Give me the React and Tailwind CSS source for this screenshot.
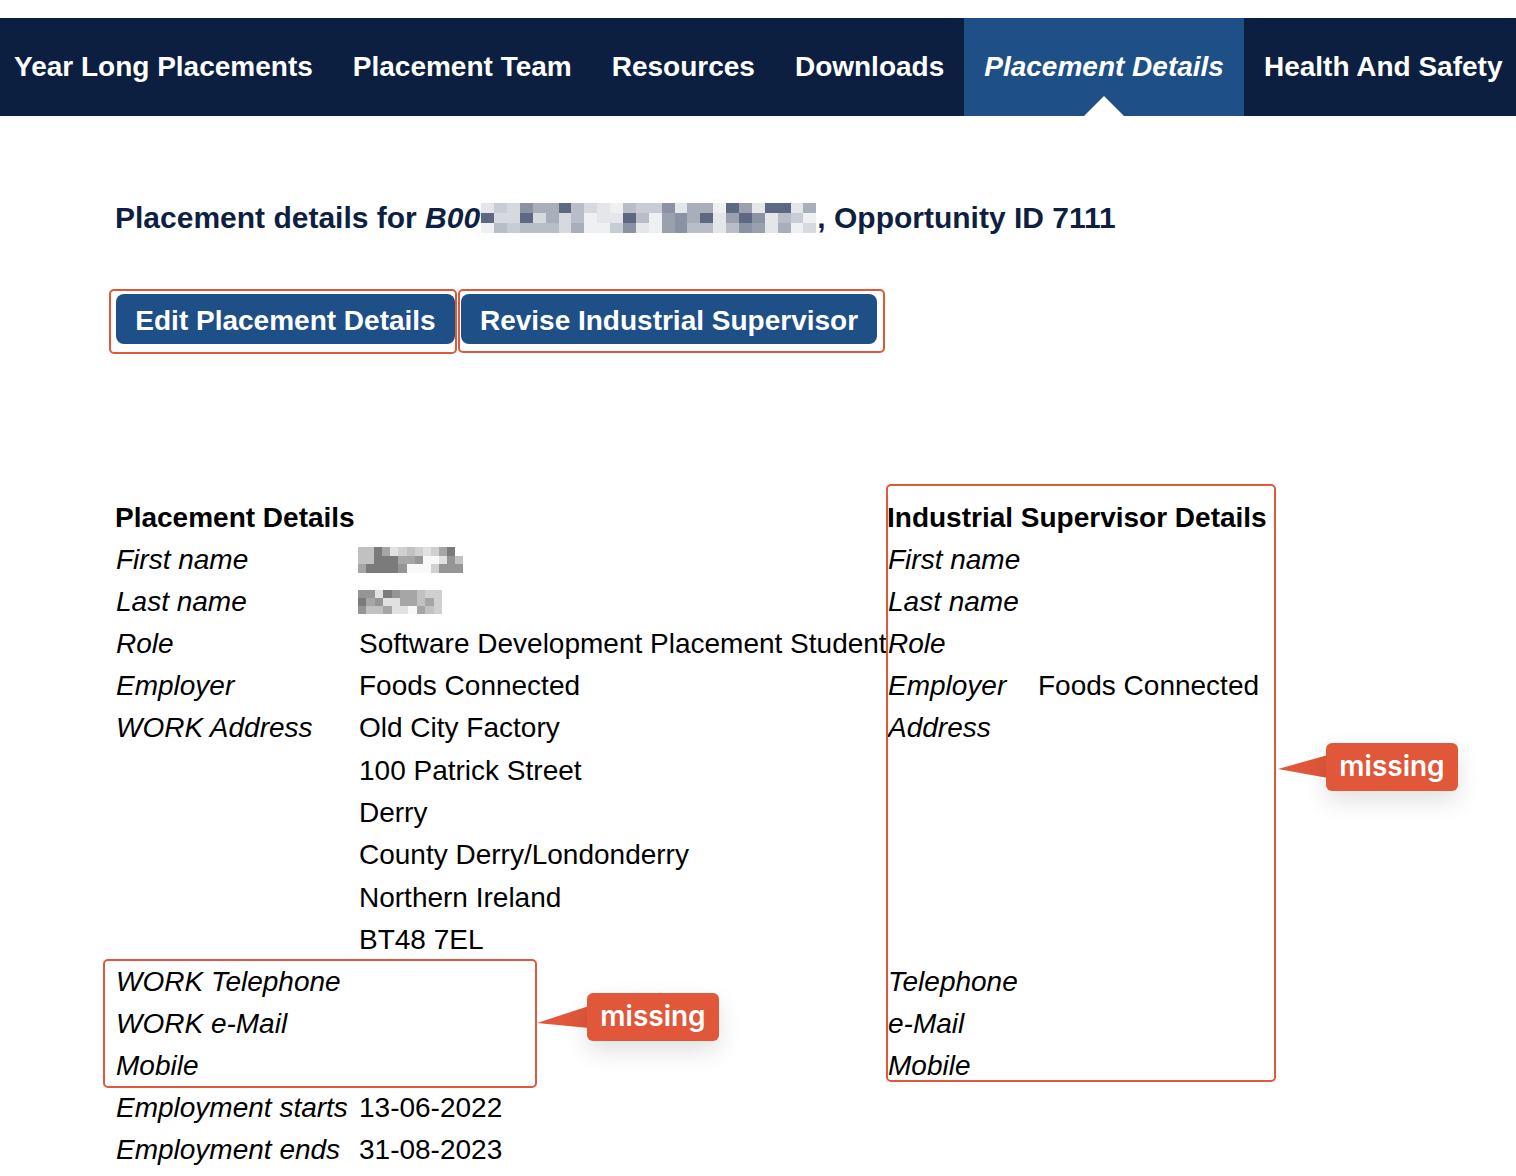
import React from "react";

const navItems = [
  { label: "Year Long Placements", first: true },
  { label: "Placement Team" },
  { label: "Resources" },
  { label: "Downloads" },
  { label: "Placement Details", active: true },
  { label: "Health And Safety" },
];

const slate = ["#e4e6ea", "#c8ccd4", "#a9aebb", "#8a92a3", "#5d6983", "#d6d9df", "#eff0f2", "#b9bdc7", "#9aa0ae"];
const headPattern = [
  "01532247506711302264804402",
  "45545257600476832408430716",
  "67177752661306837707380265",
];
const grey = ["#a6a6a6", "#c1c1c1", "#7b7b7b", "#e1e1e1", "#f8f8f8", "#959595", "#d0d0d0"];
const fnPattern = ["112036163602", "1122200544351", "0222254446555"];
const lnPattern = ["5532500166", "2053300106", "5110334016"];

function Pixels({ pattern, palette, cw, ch }) {
  return (
    <div className="flex flex-col">
      {pattern.map((row, r) => (
        <div key={r} className="flex">
          {row.split("").map((c, i) => (
            <div key={i} style={{ width: cw, height: ch, background: palette[Number(c)] }} />
          ))}
        </div>
      ))}
    </div>
  );
}

function Label({ children }) {
  return <div className="h-[42px] flex items-center italic pl-px whitespace-nowrap">{children}</div>;
}
function Val({ children }) {
  return <div className="h-[42px] flex items-center pl-px whitespace-nowrap">{children}</div>;
}
function AddrLine({ children }) {
  return <div className="h-[42.4px] flex items-center pl-px whitespace-nowrap">{children}</div>;
}
function Empty() {
  return <div className="h-[42px]" />;
}

function Callout({ boxLeft, boxTop, svgLeft, svgTop, svgW, svgH, points }) {
  return (
    <>
      <svg
        className="absolute"
        style={{ left: svgLeft, top: svgTop }}
        width={svgW}
        height={svgH}
        viewBox={`0 0 ${svgW} ${svgH}`}
      >
        <polygon points={points} fill="#e0573a" />
      </svg>
      <div
        className="absolute w-[132px] h-[48px] rounded-[6px] bg-[#e0573a] text-white flex items-center justify-center text-[28px] font-semibold font-['Inter',sans-serif] shadow-[0_10px_24px_rgba(0,0,0,0.12)]"
        style={{ left: boxLeft, top: boxTop }}
      >
        <span className="leading-none -mt-[2px]">missing</span>
      </div>
    </>
  );
}

export default function App() {
  return (
    <div className="relative w-[1516px] min-h-[1176px] bg-white font-['Liberation_Sans',Arial,sans-serif] overflow-hidden">
      <div className="h-[18px]" />
      <nav className="h-[98px] bg-[#0d1f40] flex">
        {navItems.map((it) => (
          <div
            key={it.label}
            className={
              "relative h-full flex items-center text-[28px] font-bold text-white whitespace-nowrap " +
              (it.first ? "pl-[14px] pr-[20px] " : "px-[20px] ") +
              (it.active ? "bg-[#1f4f87] italic" : "")
            }
          >
            {it.label}
            {it.active && (
              <svg className="absolute bottom-0 left-1/2 -translate-x-1/2" width="40" height="20" viewBox="0 0 40 20">
                <polygon points="0,20 20,0 40,20" fill="#ffffff" />
              </svg>
            )}
          </div>
        ))}
      </nav>

      <main className="pl-[115px]">
        <h1 className="mt-[80px] h-[42px] flex items-center text-[30px] font-bold text-[#0e1f41] whitespace-nowrap">
          <span>Placement details for&nbsp;</span>
          <span className="italic">B00</span>
          <span className="mx-[1px] mt-[2px]">
            <Pixels pattern={headPattern} palette={slate} cw={12.9} ch={10} />
          </span>
          <span>, Opportunity ID 7111</span>
        </h1>

        <div className="mt-[56px] flex gap-[6px] pl-px">
          <button className="h-[50px] w-[339px] pt-[3px] rounded-[8px] bg-[#1f4f87] text-white text-[28px] font-bold whitespace-nowrap">
            Edit Placement Details
          </button>
          <button className="h-[50px] w-[416px] pt-[3px] rounded-[8px] bg-[#1f4f87] text-white text-[28px] font-bold whitespace-nowrap">
            Revise Industrial Supervisor
          </button>
        </div>

        <div className="mt-[153px] grid grid-cols-[243px_529px_150px_auto] text-[28px] text-black leading-none">
          <div className="col-span-2 h-[42px] flex items-center font-bold">Placement Details</div>
          <div className="col-span-2 h-[42px] flex items-center font-bold">Industrial Supervisor Details</div>

          <Label>First name</Label>
          <div className="h-[42px] flex items-center">
            <Pixels pattern={fnPattern} palette={grey} cw={8.1} ch={8.4} />
          </div>
          <Label>First name</Label>
          <Empty />

          <Label>Last name</Label>
          <div className="h-[42px] flex items-center">
            <Pixels pattern={lnPattern} palette={grey} cw={8.4} ch={8} />
          </div>
          <Label>Last name</Label>
          <Empty />

          <Label>Role</Label>
          <Val>Software Development Placement Student</Val>
          <Label>Role</Label>
          <Empty />

          <Label>Employer</Label>
          <Val>Foods Connected</Val>
          <Label>Employer</Label>
          <Val>Foods Connected</Val>

          <div className="self-start">
            <AddrLine>
              <span className="italic">WORK Address</span>
            </AddrLine>
          </div>
          <div className="flex flex-col">
            <AddrLine>Old City Factory</AddrLine>
            <AddrLine>100 Patrick Street</AddrLine>
            <AddrLine>Derry</AddrLine>
            <AddrLine>County Derry/Londonderry</AddrLine>
            <AddrLine>Northern Ireland</AddrLine>
            <AddrLine>BT48 7EL</AddrLine>
          </div>
          <div className="self-start">
            <AddrLine>
              <span className="italic">Address</span>
            </AddrLine>
          </div>
          <div />

          <Label>WORK Telephone</Label>
          <Empty />
          <Label>Telephone</Label>
          <Empty />

          <Label>WORK e-Mail</Label>
          <Empty />
          <Label>e-Mail</Label>
          <Empty />

          <Label>Mobile</Label>
          <Empty />
          <Label>Mobile</Label>
          <Empty />

          <Label>Employment starts</Label>
          <Val>13-06-2022</Val>
          <Empty />
          <Empty />

          <Label>Employment ends</Label>
          <Val>31-08-2023</Val>
          <Empty />
          <Empty />
        </div>
      </main>

      {/* annotation overlays */}
      <div className="absolute left-[109px] top-[289px] w-[348px] h-[65px] border-2 border-[#e0573a] rounded-[5px]" />
      <div className="absolute left-[458px] top-[289px] w-[427px] h-[64px] border-2 border-[#e0573a] rounded-[5px]" />
      <div className="absolute left-[103px] top-[959px] w-[434px] h-[129px] border-2 border-[#e0573a] rounded-[5px]" />
      <div className="absolute left-[886px] top-[484px] w-[390px] h-[598px] border-2 border-[#e0573a] rounded-[5px]" />

      <Callout boxLeft={587} boxTop={993} svgLeft={537} svgTop={1006} svgW={52} svgH={23} points="0,17 52,0 52,22" />
      <Callout boxLeft={1326} boxTop={743} svgLeft={1278} svgTop={755} svgW={50} svgH={24} points="0,14 50,0 50,23" />
    </div>
  );
}
